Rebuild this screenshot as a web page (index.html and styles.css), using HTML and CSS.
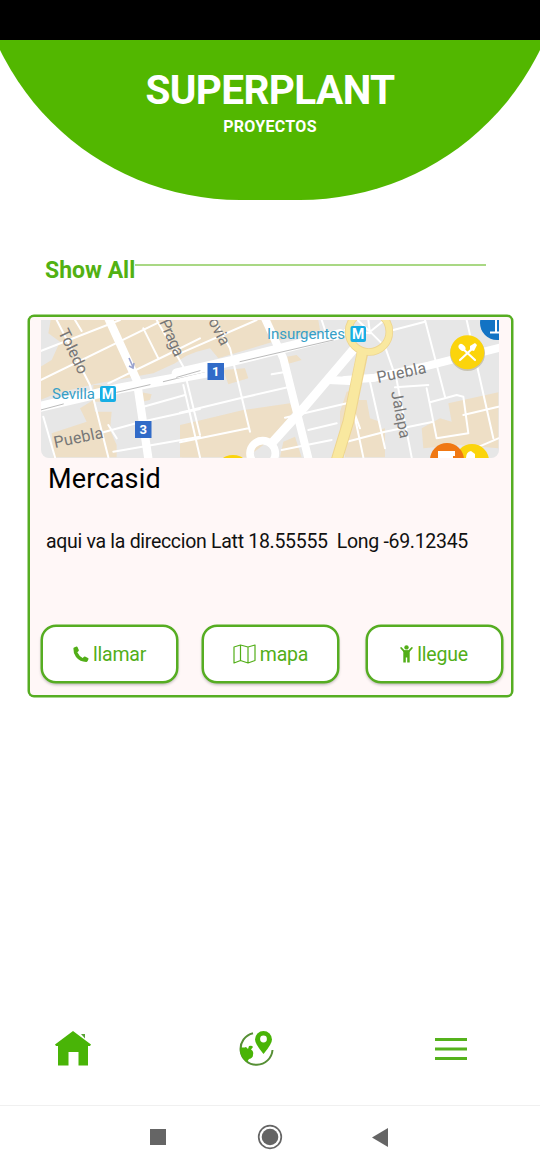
FILE: index.html
```html
<!DOCTYPE html>
<html lang="es">
<head>
<meta charset="utf-8">
<title>Superplant</title>
<link rel="stylesheet" href="styles.css">
</head>
<body>
<div class="screen">
  <div class="status-bar"></div>
  <header class="header">
    <div class="dome">
      <h1 class="brand">SUPERPLANT</h1>
      <p class="subtitle">PROYECTOS</p>
    </div>
  </header>

  <div class="section-head"><span class="section-title">Show All</span><span class="rule"></span></div>

  <article class="card">
    <svg class="map" viewBox="41 320 458 138" width="458" height="138">
      <rect x="41" y="320" width="458" height="138" fill="#e7e7e7"/>
      <g fill="#eedfc6">
        <g transform="translate(20 305) scale(.33333)">
          <path d="M92 45H540V125L465 175L400 205L235 235L110 265L62 285V185L95 165L120 110L85 85Z"/>
          <path d="M180 310L220 285L225 320L275 320L270 375L290 420V457H100L95 385L200 350ZM365 262L395 268L390 285L365 290ZM485 375L540 362V457H485ZM220 240H245V290H220Z"/>
        </g>
        <g transform="translate(180 305) scale(.33333)">
          <path d="M50 45H415L420 75L280 110L115 160L90 130L50 140L0 160V45ZM130 195L195 190L205 220L145 238ZM350 150L365 165L320 178V155ZM0 360L65 345L190 315L330 295L340 320L270 405L200 457H0ZM310 410L345 395L365 457H300ZM500 260L525 255V330L480 380V320Z"/>
        </g>
        <g transform="translate(345 305) scale(.33333)">
          <path d="M35 285L65 285L75 340L105 350L115 457H0V390ZM310 295L460 262V430L340 420L235 430L230 370L285 340L320 350ZM0 400L120 370V457H0Z"/>
        </g>
      </g>
      <g fill="none" stroke="#fff" stroke-width="6" stroke-linecap="round" stroke-linejoin="round">
        <g transform="translate(20 305) scale(.33333)">
          <path d="M62 138L300 45M62 225L410 55M110 45L210 240L265 457M165 45L185 78M370 70L415 160M265 235L440 150L540 100M410 45L490 185L540 390M365 307L495 270M250 382L365 350L540 312M70 335L105 457M265 360L290 400M280 440L540 395"/>
          <path d="M265 40L350 225L385 460" stroke-width="25"/>
          <path d="M40 310L300 250L560 203" stroke-width="30"/>
          <path d="M62 315L130 297M290 262L390 239M430 230L555 200" stroke="#bbb" stroke-width="3"/>
        </g>
        <g transform="translate(180 305) scale(.33333)">
          <path d="M0 145L230 45M100 40L150 130L210 380M10 240L60 457M0 323L180 280L330 245M0 412L205 370M425 45L435 75M315 338L520 290M385 375L470 355M305 435L455 405M275 208L320 200M520 315L540 370"/>
          <path d="M255 40L310 160L385 460M445 225L510 228" stroke-width="24"/>
          <path d="M-10 205L160 167L480 87" stroke-width="30"/>
          <path d="M525 128L370 310L275 415" stroke-width="27"/>
          <path d="M-10 217L60 197M180 170L460 105" stroke="#bbb" stroke-width="3"/>
          <circle cx="248" cy="445" r="38" stroke-width="23"/>
        </g>
        <g transform="translate(345 305) scale(.33333)">
          <path d="M145 75L240 50M0 75L75 85L70 45M240 45L300 275M365 45L445 400M75 230L120 430M120 125L155 225L200 457M150 247L250 240M245 250L275 400L370 385L355 275L335 270L255 292M355 330L460 305M0 412L120 380L265 350M25 315L55 457M390 430L460 400M75 80L0 10M75 80L150 20M75 80L120 125"/>
          <path d="M0 225L90 218L250 182L465 128" stroke-width="24"/>
        </g>
      </g>
      <g fill="none" transform="translate(345 305) scale(.33333)">
        <path d="M-25 465L10 350L52 145" stroke="#eed58f" stroke-width="35"/>
        <circle cx="72" cy="80" r="61" stroke="#eed58f" stroke-width="23"/>
        <path d="M-25 465L10 350L52 140" stroke="#f9e89f" stroke-width="29"/>
        <circle cx="72" cy="80" r="61" stroke="#f9e89f" stroke-width="18"/>
      </g>
      <path d="M129 358l4 9m-4-1l4 2 1-5" fill="none" stroke="#9aa3cf" stroke-width="1.600"/>
      <g class="street">
        <text transform="translate(58 332) rotate(64)" textLength="48">Toledo</text>
        <text transform="translate(159 322) rotate(66)" textLength="39">Praga</text>
        <text transform="translate(208 321) rotate(63)" textLength="29">ovia</text>
        <text transform="translate(55 448) rotate(-12)" textLength="50">Puebla</text>
        <text transform="translate(378 383) rotate(-12)" textLength="50">Puebla</text>
        <text transform="translate(391 392) rotate(79)" textLength="48">Jalapa</text>
      </g>
      <g class="station">
        <text x="52" y="399" textLength="43">Sevilla</text>
        <text x="267" y="338.500" textLength="78">Insurgentes</text>
      </g>
      <g class="badge-text">
        <rect x="100" y="386" width="16" height="16" rx="2" fill="#16aee5"/><text x="108" y="399">M</text>
        <rect x="350.500" y="326" width="15.500" height="16" rx="2" fill="#16aee5"/><text x="358.200" y="339">M</text>
        <rect x="135" y="421" width="16.500" height="17" fill="#316bc8"/><text class="route" x="143.200" y="434">3</text>
        <rect x="207.500" y="363" width="16.500" height="17" fill="#316bc8"/><text class="route" x="215.700" y="376">1</text>
      </g>
      <circle cx="467.500" cy="353.500" r="17.500" fill="#c8c3b2"/>
      <circle cx="467.300" cy="352.300" r="17" fill="#fbd40b"/>
      <path d="M462 348L475 360M473 348L460 360" stroke="#fff" stroke-width="2.200" stroke-linecap="round"/>
      <ellipse cx="462" cy="347.500" rx="2.800" ry="4" transform="rotate(-45 462 347.500)" fill="#fff"/>
      <path d="M470 346l5-3 2 2-3 6-4-1z" fill="#fff"/>
      <circle cx="497" cy="323" r="17" fill="#1273c4"/>
      <path d="M490 332.500H499M496 320V332" stroke="#fff" stroke-width="2"/>
      <circle cx="472" cy="461" r="17" fill="#fbd40b"/>
      <path d="M466 458q0-6 5-7l4 3v4z" fill="#fff"/>
      <circle cx="447" cy="460" r="17" fill="#f07813"/>
      <path d="M438 451h17v5h-2v2h-15z" fill="#fff"/>
      <circle cx="233" cy="473" r="18" fill="#fbd40b"/>
    </svg>

    <h2 class="name">Mercasid</h2>
    <p class="address">aqui va la direccion Latt 18.55555&nbsp; Long -69.12345</p>
    <div class="actions">
      <button class="action">
        <svg width="16" height="17" viewBox="0 0 16 17"><path d="M1 1.500L3.500.500Q4.200.300 4.500 1L5.800 4Q6 4.700 5.400 5.200L4.300 6.300Q6 10 9.700 12L11 10.800Q11.500 10.300 12 10.500L15 12Q15.700 12.400 15.500 13L14.700 15Q14.300 15.800 13.500 15.900Q7 16 3 11Q.100 7 .400 2.500Q.400 1.800 1 1.500Z" fill="currentColor"/></svg>
        <span>llamar</span>
      </button>
      <button class="action">
        <svg width="23" height="20" viewBox="0 0 23 20"><path d="M1 3L7.500 1L15 3L22 1V16.500L15 19L7.500 16.500L1 19ZM7.500 1V16.500M15 3V19" fill="none" stroke="currentColor" stroke-width="1.200" stroke-linejoin="round"/></svg>
        <span>mapa</span>
      </button>
      <button class="action">
        <svg width="13" height="18" viewBox="0 0 13 18"><circle cx="6.500" cy="2.400" r="2.200" fill="currentColor"/><path d="M1.200 3L4 6.200H9L11.800 3" fill="none" stroke="currentColor" stroke-width="1.800" stroke-linecap="round" stroke-linejoin="round"/><path d="M3.300 5.500H9.700V17.500H7.200V12.500H5.800V17.500H3.300Z" fill="currentColor"/></svg>
        <span>llegue</span>
      </button>
    </div>
  </article>

  <nav class="tabs">
    <svg width="38" height="38" viewBox="0 0 38 38"><path d="M19 1L37 14.500L36 16H34V35.500H24.500V22H14.500V35.500H4V16H2L1 14.500Z" fill="#49b407"/><path d="M27 4H31V8.500Z" fill="#58a334"/></svg>
    <svg width="38" height="38" viewBox="0 0 38 38"><path d="M15 3.200A16 16 0 1 0 34.500 20" fill="none" stroke="#568f35" stroke-width="2"/><path d="M3 17Q5 18 8 17L10 19L11 16Q14 15 15 17L13 19.500Q16 21 15 25Q15 28 11 29L9 32Q3 28 2 21Z" fill="#49b407"/><path d="M25.500 24Q17 14 17 9.500A8.500 8.500 0 0 1 34 9.500Q34 14 25.500 24Z" fill="#49b407"/><circle cx="25.500" cy="9" r="3.400" fill="#fff"/></svg>
    <svg width="32" height="24" viewBox="0 0 32 24"><path d="M0 2.500H32M0 12H32M0 21.500H32" stroke="#55b21c" stroke-width="3.200"/></svg>
  </nav>

  <footer class="system-nav">
    <svg width="16" height="16"><rect width="16" height="16" fill="#656565"/></svg>
    <svg width="26" height="26"><circle cx="13" cy="13" r="11.300" fill="none" stroke="#656565" stroke-width="1.700"/><circle cx="13" cy="13" r="8.300" fill="#656565"/></svg>
    <svg width="16" height="19"><path d="M0 9.500L16 0V19Z" fill="#656565"/></svg>
  </footer>
</div>
</body>
</html>
```

FILE: styles.css
```css
* { box-sizing: border-box; }
body { margin: 0; background: #fff; font-family: Roboto, "Liberation Sans", sans-serif; }
h1, h2, p { margin: 0; }
svg { display: block; flex: none; }

.screen { width: 540px; height: 1170px; display: flex; flex-direction: column; overflow: hidden; }
.status-bar { height: 40px; flex: none; background: #000; }

.header { height: 160px; flex: none; overflow: hidden; display: flex; flex-direction: column; justify-content: flex-end; align-items: center; }
.dome { flex: none; width: 594px; height: 540px; padding-top: 406px; border-radius: 0 0 267px 267px; background: #52b700; color: #fff; text-align: center; }
.brand { font-size: 40.500px; line-height: 48px; font-weight: 700; letter-spacing: -.6px; }
.subtitle { margin-top: 3px; font-size: 16px; line-height: 20px; font-weight: 700; letter-spacing: .3px; }

.section-head { flex: none; display: flex; height: 28px; margin: 56px 54px 0 45px; }
.section-title { margin-top: 1px; color: #52b112; font-size: 23px; line-height: 28px; font-weight: 700; white-space: nowrap; }
.rule { flex: 1; height: 2px; margin-top: 8px; background: #a9d884; }

.card { flex: none; width: 485px; height: 382px; margin: 31px 27.500px 0; padding: 3px 8px 0 11.500px; border: 2px solid #56ad22; box-shadow: 0 0 0 .5px #56ad22; border-radius: 6px; background: #fff7f7; display: flex; flex-direction: column; }
.map { border-radius: 0 0 8px 8px; overflow: hidden; }
.street text { font-size: 16px; fill: #777; }
.station text { font-size: 15px; fill: #369fc7; }
.badge-text text { font-size: 14px; font-weight: 700; fill: #fff; text-anchor: middle; }
.badge-text .route { font-size: 13px; }
.name { margin: 5px 0 0 7px; font-size: 27px; line-height: 32px; font-weight: 400; letter-spacing: .2px; color: #000; }
.address { margin: 35px 0 0 5px; font-size: 19.500px; line-height: 24px; letter-spacing: -.3px; color: #111; white-space: nowrap; }

.actions { display: grid; grid-template-columns: 137px 137px 137px; column-gap: 24px; margin-top: 71px; }
.action:nth-child(3) { margin-left: 2.500px; margin-right: -2.500px; }
.action { height: 58px; padding: 0; display: flex; align-items: center; justify-content: center; gap: 4px; border: 2px solid #56ad22; border-radius: 15px; background: #fff; box-shadow: 0 0 0 .5px #56ad22, 0 2px 3px rgba(0, 0, 0, .25); color: #52ae18; font: 400 19.500px/24px Roboto, "Liberation Sans", sans-serif; letter-spacing: -.2px; }
.action span { padding-top: 1px; }

.tabs { flex: none; display: grid; grid-template-columns: 184px 196px 32px; align-items: center; height: 57px; margin-top: auto; padding-left: 54px; }
.tabs svg:last-child { margin-left: 1px; }
.system-nav { flex: none; display: grid; grid-template-columns: 107px 115px 16px; align-items: center; height: 65px; margin-top: 28px; padding: 0 0 2px 150px; border-top: 1px solid #f0f0f0; }
```
